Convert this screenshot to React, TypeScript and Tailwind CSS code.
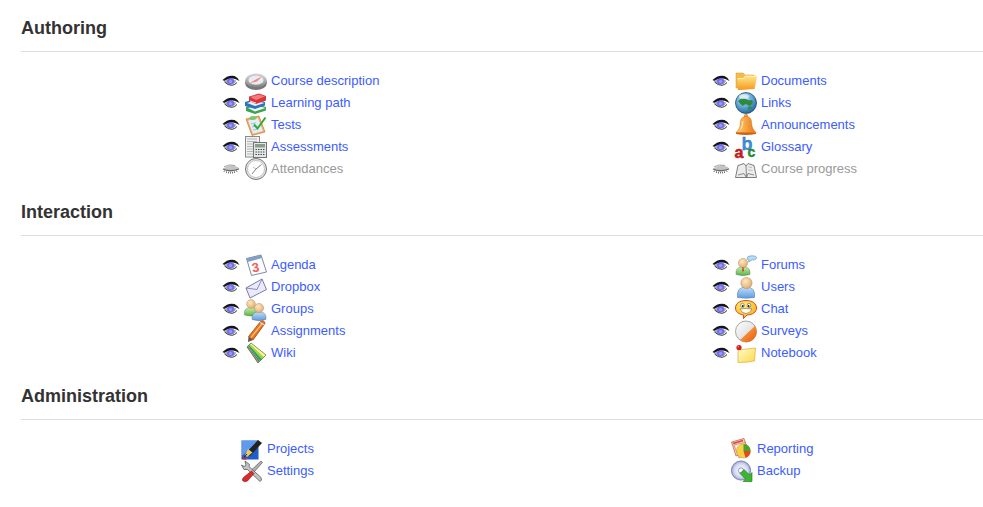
import type { ReactNode } from "react";

const Svg = ({ children }: { children: ReactNode }) => (
  <svg viewBox="0 0 22 22" className="h-[22px] w-[22px] shrink-0 overflow-visible">
    {children}
  </svg>
);

const Defs = () => (
  <svg className="absolute h-0 w-0">
    <defs>
      <linearGradient id="metal" x1="0" y1="0" x2="0" y2="1">
        <stop offset="0" stopColor="#e4e4e4" />
        <stop offset="1" stopColor="#7c7c7c" />
      </linearGradient>
      <linearGradient id="folder" x1="0" y1="0" x2="0" y2="1">
        <stop offset="0" stopColor="#ffe88c" />
        <stop offset="1" stopColor="#f8981c" />
      </linearGradient>
      <linearGradient id="bell" x1="0" y1="0" x2="1" y2="0">
        <stop offset="0" stopColor="#ffd27a" />
        <stop offset="1" stopColor="#ee7410" />
      </linearGradient>
      <radialGradient id="globe" cx="0.4" cy="0.3" r="0.8">
        <stop offset="0" stopColor="#cfeaf8" />
        <stop offset="0.6" stopColor="#4c97c8" />
        <stop offset="1" stopColor="#1a5587" />
      </radialGradient>
      <radialGradient id="skin" cx="0.4" cy="0.35" r="0.7">
        <stop offset="0" stopColor="#fde8c4" />
        <stop offset="1" stopColor="#e0ab6c" />
      </radialGradient>
      <linearGradient id="blueBody" x1="0" y1="0" x2="0" y2="1">
        <stop offset="0" stopColor="#c4def9" />
        <stop offset="1" stopColor="#5d9ce2" />
      </linearGradient>
      <linearGradient id="greenBody" x1="0" y1="0" x2="0" y2="1">
        <stop offset="0" stopColor="#c9eeac" />
        <stop offset="1" stopColor="#5ab545" />
      </linearGradient>
      <radialGradient id="smile" cx="0.4" cy="0.3" r="0.8">
        <stop offset="0" stopColor="#fff27a" />
        <stop offset="1" stopColor="#f5a70c" />
      </radialGradient>
      <linearGradient id="orangePie" x1="0" y1="0" x2="1" y2="1">
        <stop offset="0" stopColor="#ffb05a" />
        <stop offset="1" stopColor="#e85a08" />
      </linearGradient>
      <linearGradient id="sticky" x1="0" y1="0" x2="1" y2="1">
        <stop offset="0" stopColor="#fffcc8" />
        <stop offset="1" stopColor="#fbd84f" />
      </linearGradient>
      <linearGradient id="whitePie" x1="0" y1="0" x2="1" y2="1">
        <stop offset="0" stopColor="#ffffff" />
        <stop offset="1" stopColor="#cfcfcf" />
      </linearGradient>
      <radialGradient id="disc" cx="0.5" cy="0.5" r="0.5">
        <stop offset="0" stopColor="#ffffff" />
        <stop offset="0.7" stopColor="#d3d9f2" />
        <stop offset="1" stopColor="#98a1d0" />
      </radialGradient>
    </defs>
  </svg>
);

const Eye = ({ off }: { off?: boolean }) =>
  off ? (
    <svg viewBox="0 0 18 12" className="h-3 w-[18px] shrink-0">
      <path d="M1 6Q5 2 11 2.5Q15 3 17.5 5.5Q14 8.5 8 8.5Q3.5 8.5 1 6Z" fill="#c4c4c4" />
      <path d="M2 3.8Q7 .8 13 2.5" fill="none" stroke="#8d8d8d" strokeWidth="0.8" />
      <path d="M1 6Q8 9.5 17 6" fill="none" stroke="#6c6c6c" strokeWidth="1.3" />
      <path d="M2.5 7.5L2 9M4.5 8.3V10M6.5 8.8V10.5M8.5 9V10.5M10.5 8.8V10.5M12.5 8.3V10M14.5 7.5L15 9" stroke="#777" strokeWidth="1" />
    </svg>
  ) : (
    <svg viewBox="0 0 18 12" className="h-3 w-[18px] shrink-0">
      <path d="M0.5 5Q6 -0.5 12.5 1Q16 2.5 17.5 6L14.5 4.5Q9 2 2.5 6Z" fill="#151515" />
      <path d="M2 6Q7 2.5 14 5.5Q14 9 9 9.5Q4.5 9.5 2 6Z" fill="#a9a9b4" />
      <ellipse cx="8.6" cy="6.2" rx="3.5" ry="3" fill="#6f6df2" />
      <ellipse cx="8.6" cy="6.6" rx="1.7" ry="1.5" fill="#9b9aff" />
      <path d="M2.5 7Q6 10.5 10 10.3Q13 10 15 7.5" fill="none" stroke="#3a3a3a" strokeWidth="1" />
    </svg>
  );

const Compass = () => (
  <Svg>
    <ellipse cx="11" cy="12.8" rx="11" ry="7.2" fill="#777" />
    <ellipse cx="11" cy="10.5" rx="10.8" ry="7.2" fill="url(#metal)" />
    <ellipse cx="11" cy="10" rx="8" ry="5" fill="#e8ecf2" stroke="#999" strokeWidth="0.5" />
    <path d="M5 13L17 6.5L10 11Z" fill="#e8483c" />
    <path d="M5 13L17 6.5L12 11.5Z" fill="#f28a80" />
  </Svg>
);

const Books = () => (
  <Svg>
    <path d="M1 15L11 12L21 15V18.5L10 22L1 19Z" fill="#3aa450" />
    <path d="M3 16L11 13.5L20.5 16L10 19.5Z" fill="#f0f7ee" />
    <path d="M0 10L10 7L20 10V13.5L10 17L0 14Z" fill="#2a72c4" />
    <path d="M2 11L10 8.5L19.5 11L10 14Z" fill="#eaf1fa" />
    <path d="M4 4.5L14 1.5L21 4V8.5L11 12L4 9Z" fill="#d9343a" />
    <path d="M5 5L14 2.5L20 4.5L11 8Z" fill="#f27a80" />
    <path d="M5 9L11 11" stroke="#fff" strokeWidth="0.8" />
  </Svg>
);

const Tests = () => (
  <Svg>
    <path d="M1 5L14 2L20 18L7 21.5Z" fill="#f5ab62" stroke="#cc7a32" strokeWidth="0.7" />
    <path d="M3 6.5L13 4L18 17L8 19.8Z" fill="#e0eef9" />
    <path d="M6 10L11 8.8M7 13L12 11.8M8 16L13 14.8" stroke="#93b3cf" strokeWidth="0.8" />
    <ellipse cx="8" cy="4" rx="3.5" ry="2" fill="#7cc86c" />
    <path d="M9 10.5L12.5 14.5L20.5 3.5" fill="none" stroke="#2dab34" strokeWidth="2" />
  </Svg>
);

const Assessments = () => (
  <Svg>
    <rect x="0.5" y="0.5" width="14" height="20.5" fill="#f1f1f1" stroke="#8b8b8b" />
    <path d="M2 3H12M2 5.5H12M2 8H8M2 10.5H8M2 13H8M2 15.5H8M2 18H8" stroke="#a5a5a5" strokeWidth="0.8" />
    <rect x="8.5" y="6.5" width="13" height="15" fill="#e3e6e6" stroke="#6f7676" />
    <rect x="10" y="8" width="10" height="3.5" fill="#8c9b8b" />
    <path d="M10.5 13.5H19.5M10.5 16H19.5M10.5 18.5H19.5" stroke="#444" strokeWidth="1.1" strokeDasharray="1.4 1.1" />
  </Svg>
);

const Clock = () => (
  <Svg>
    <circle cx="11" cy="11" r="10.5" fill="#e6e6e6" stroke="#777" strokeWidth="1" />
    <circle cx="11" cy="11" r="8.5" fill="#fff" stroke="#b5b5b5" strokeWidth="0.8" />
    <path d="M11 11L16.5 6.5M11 11L7 16" stroke="#808080" strokeWidth="1" />
    <path d="M11 11L8 9" stroke="#aaa" strokeWidth="0.8" />
  </Svg>
);

const Folder = () => (
  <Svg>
    <path d="M1 3H8L10 5H19V9H3V18H1Z" fill="#f4bb4c" stroke="#d9952a" strokeWidth="0.5" />
    <path d="M3 20L2 8H8L10 5.5H21L22 7L19.5 19L5 20Z" fill="url(#folder)" />
    <path d="M3 8.5H8.5L10.5 6.5H21" fill="none" stroke="#fff4bd" strokeWidth="0.8" />
  </Svg>
);

const Globe = () => (
  <Svg>
    <circle cx="11" cy="11" r="10.5" fill="url(#globe)" stroke="#1c4a70" strokeWidth="0.8" />
    <path d="M3 9Q7 5 11 7Q13 9 17 8Q19 11 16 13Q14 15 13 13Q10 11 8 14Q5 12 3 9Z" fill="#2f8a3f" />
    <path d="M13 15Q16 14 17 15Q15 18 13 18Z" fill="#2f8a3f" />
    <ellipse cx="9" cy="4.5" rx="5" ry="2.3" fill="#e9f6fc" opacity="0.7" />
  </Svg>
);

const Bell = () => (
  <Svg>
    <circle cx="11" cy="2" r="1.7" fill="#f4a23c" stroke="#c8690d" strokeWidth="0.5" />
    <path d="M11 2.5C6.5 2.5 5.5 5.5 5.3 10C5.1 14 3.5 16 1 18.5H21C18.5 16 16.9 14 16.7 10C16.5 5.5 15.5 2.5 11 2.5Z" fill="url(#bell)" stroke="#c8690d" strokeWidth="0.5" />
    <path d="M1 18.5H21V20Q11 22 1 20Z" fill="#d5600a" />
    <path d="M8 7Q7.5 12 6 15" stroke="#ffeebf" strokeWidth="1" fill="none" />
  </Svg>
);

const Glossary = () => (
  <Svg>
    <text x="6.5" y="13.5" fontFamily="Liberation Sans, sans-serif" fontWeight="700" fontSize="18" fill="#3b8fe0" stroke="#2b6fb8" strokeWidth="0.3">b</text>
    <text x="12.5" y="20.5" fontFamily="Liberation Sans, sans-serif" fontWeight="700" fontSize="14" fill="#1f9c3a" stroke="#0e6e24" strokeWidth="0.4">c</text>
    <text x="-0.5" y="22" fontFamily="Liberation Sans, sans-serif" fontWeight="700" fontSize="16" fill="#d9191f" stroke="#a80f14" strokeWidth="0.5">a</text>
  </Svg>
);

const OpenBook = () => (
  <Svg>
    <path d="M0.5 19.5L3 7.5L9 5.5L11 8L13 5.5L19 7.5L21.5 19.5H0.5Z" fill="#ececec" stroke="#6f6f6f" strokeWidth="0.9" />
    <path d="M11 8L11.5 19.5M3 17L9 15.5L11.5 19.5L13 15.5L19 17" fill="none" stroke="#6f6f6f" strokeWidth="0.8" />
    <path d="M13.5 9L17 9.5M13 12L17.5 12.5" stroke="#b0b0b0" strokeWidth="0.8" fill="none" />
  </Svg>
);

const Agenda = () => (
  <Svg>
    <path d="M1.5 4.5L16 1L21.5 18L6.5 21.5Z" fill="#fcfcfc" stroke="#6e7f96" strokeWidth="0.9" />
    <path d="M1.5 4.5L16 1L17 4L2.5 8Z" fill="#7f9fc6" />
    <text x="7" y="18" fontFamily="Liberation Sans, sans-serif" fontWeight="700" fontSize="13" fill="#f06060" transform="rotate(-10 10 14)">3</text>
  </Svg>
);

const Envelope = () => (
  <Svg>
    <path d="M1 12L17 3L21.5 13.5L5 22Z" fill="#ebe9fc" stroke="#5e5c94" strokeWidth="0.8" />
    <path d="M1 12L12 13.5L17 3" fill="none" stroke="#7775aa" strokeWidth="0.8" />
  </Svg>
);

const Person = ({ cx, cy, body, s = 1 }: { cx: number; cy: number; body: string; s?: number }) => (
  <g transform={`translate(${cx} ${cy}) scale(${s})`}>
    <path d="M-6.5 11.5C-7.5 6 -4 4 0 4C4 4 7.5 6 6.5 11.5Q0 13.5 -6.5 11.5Z" fill={body} stroke="#3f6f50" strokeWidth="0.4" />
    <circle cx="0" cy="0.5" r="4.4" fill="url(#skin)" stroke="#b4834d" strokeWidth="0.4" />
  </g>
);

const Groups = () => (
  <Svg>
    <Person cx={6} cy={5.5} body="url(#greenBody)" />
    <Person cx={14} cy={9.5} body="url(#blueBody)" s={1.05} />
  </Svg>
);

const Pencil = () => (
  <Svg>
    <path d="M3.5 16.5L15.5 1.5Q19.5 -0.5 20 3.5L8 20Z" fill="#f0731c" stroke="#8f3d0c" strokeWidth="0.7" />
    <path d="M6 17.5L17.5 3" stroke="#ffc98c" strokeWidth="1.2" />
    <path d="M3.5 16.5L3 22L8 20Z" fill="#6b5544" />
    <path d="M15 2.5L19.5 5" stroke="#dcdcdc" strokeWidth="1.4" />
  </Svg>
);

const Wiki = () => (
  <Svg>
    <path d="M6 1L21 13L19 15L5 2Z" fill="#fff2a0" />
    <path d="M5 2L19 15L17 17L4 3Z" fill="#a6d63f" />
    <path d="M4 3L17 17L15 19L3 4Z" fill="#35a53c" />
    <path d="M3 4L15 19L13.8 20L2.5 4.5Z" fill="#2f80d0" />
    <path d="M2.5 4.5L13.8 20L13 21L2 5Z" fill="#e8601c" />
    <path d="M6 1L21 13L13 21L2 5Z" fill="none" stroke="#44701a" strokeWidth="0.7" />
  </Svg>
);

const Forums = () => (
  <Svg>
    <Person cx={8} cy={8.5} body="url(#greenBody)" s={1.05} />
    <path d="M12 4.5Q12 2 16 1.8Q21.5 1.5 21.5 3.8Q21.5 6 17 6L13.5 8L14 5.8Q12 5.8 12 4.5Z" fill="#b3dbf5" stroke="#5c93bf" strokeWidth="0.6" />
    <path d="M7.5 13L8.5 13L9 16.5L8 18L7 16.5Z" fill="#d44b30" />
  </Svg>
);

const Users = () => (
  <Svg>
    <path d="M2.5 21.5Q1 11 11 11Q21 11 19.5 21.5Q11 23 2.5 21.5Z" fill="url(#blueBody)" stroke="#4578ae" strokeWidth="0.5" />
    <circle cx="11.5" cy="7" r="5.6" fill="url(#skin)" stroke="#b4834d" strokeWidth="0.5" />
  </Svg>
);

const Chat = () => (
  <Svg>
    <path d="M11 2.5C17.5 2.5 21.5 5.5 21.5 10C21.5 14 17.5 17 12 17L8.5 20.5L8.5 17C3.5 16 0.5 14 0.5 10C0.5 5.5 4.5 2.5 11 2.5Z" fill="url(#smile)" stroke="#dd4a1c" strokeWidth="1" />
    <ellipse cx="7.5" cy="7.5" rx="1.8" ry="2.2" fill="#fff" stroke="#444" strokeWidth="0.5" />
    <ellipse cx="14" cy="7.5" rx="1.8" ry="2.2" fill="#fff" stroke="#444" strokeWidth="0.5" />
    <circle cx="7.8" cy="8" r="0.9" fill="#111" />
    <circle cx="13.7" cy="8" r="0.9" fill="#111" />
    <path d="M5 11Q11 10 17 11Q15 15.5 11 15.5Q7 15.5 5 11Z" fill="#fff" stroke="#7a3b0c" strokeWidth="0.5" />
  </Svg>
);

const Survey = () => (
  <Svg>
    <circle cx="11" cy="11.5" r="10.5" fill="url(#whitePie)" stroke="#8f8f8f" strokeWidth="0.8" />
    <path d="M20 6A10.4 10.4 0 0 1 5 20Z" fill="url(#orangePie)" />
  </Svg>
);

const Note = () => (
  <Svg>
    <path d="M3 8L20.5 6L19.5 19Q12 20.5 3 20.5Z" fill="url(#sticky)" stroke="#e0ab36" strokeWidth="0.7" />
    <circle cx="4" cy="5.5" r="2.6" fill="#d71c1c" />
    <circle cx="3.3" cy="4.8" r="0.7" fill="#ff9a9a" />
  </Svg>
);

const Projects = () => (
  <Svg>
    <rect x="0.5" y="2.5" width="17" height="19" fill="#1f5ec8" />
    <path d="M1 3H17L1 18Z" fill="#5f9af0" />
    <path d="M5 15L17 2L21 5L9 18Z" fill="#222" />
    <path d="M4 17L7 11L11.5 14.5L6 19Z" fill="#edc95e" />
    <path d="M1.5 21L6 16" stroke="#222" strokeWidth="1" />
    <path d="M1 17Q4 19 2 21Q5 22 7 20" fill="none" stroke="#e03030" strokeWidth="0.9" />
  </Svg>
);

const Settings = () => (
  <Svg>
    <path d="M4 1L8.5 4.5L8 6.5L20 17.5Q21.5 20.5 19 21.5L6.5 9.5L3 9.5L0.5 5L3 6.5L5 5.5Z" fill="#c4c4c4" stroke="#484848" strokeWidth="0.7" />
    <path d="M20 1L21.5 2.5L13.5 11.5L11 9.5Z" fill="#b0b0b0" stroke="#484848" strokeWidth="0.6" />
    <path d="M10.5 11L13 13.5L6.5 21Q3 22.5 1.5 20.5Q1 18.5 3 17Z" fill="#dc2a2e" stroke="#7c1313" strokeWidth="0.6" />
  </Svg>
);

const Reporting = () => (
  <Svg>
    <path d="M0.5 4L13 0.5L17 12L5 18Z" fill="#f6d0c2" stroke="#c2503a" strokeWidth="0.7" />
    <path d="M2 5.5L12 2.5" stroke="#d64b30" strokeWidth="1.6" />
    <path d="M3 7L14 4.5L18 17L8 20Z" fill="#fbe9dd" stroke="#c2503a" strokeWidth="0.5" />
    <circle cx="12.5" cy="13" r="7" fill="#f8cf45" stroke="#c09018" strokeWidth="0.4" />
    <path d="M12.5 13V6A7 7 0 0 1 19.5 13Z" fill="#47a62f" />
    <path d="M12.5 13H19.5A7 7 0 0 1 14.5 19.7Z" fill="#e04a22" />
  </Svg>
);

const Backup = () => (
  <Svg>
    <circle cx="10" cy="10.5" r="9.6" fill="url(#disc)" stroke="#5d67a8" strokeWidth="0.7" />
    <circle cx="10" cy="10.5" r="2.6" fill="#fff" stroke="#6b74ad" strokeWidth="0.7" />
    <path d="M13 9.5L18.5 15L21 12.5V21.5H12L14.5 19L9 13.5Z" fill="#3cb531" stroke="#1c7519" strokeWidth="0.6" />
  </Svg>
);

type Tool = { name: string; icon: ReactNode; off?: boolean };

const sections: { title: string; rows: [Tool, Tool][]; admin?: boolean }[] = [
  {
    title: "Authoring",
    rows: [
      [{ name: "Course description", icon: <Compass /> }, { name: "Documents", icon: <Folder /> }],
      [{ name: "Learning path", icon: <Books /> }, { name: "Links", icon: <Globe /> }],
      [{ name: "Tests", icon: <Tests /> }, { name: "Announcements", icon: <Bell /> }],
      [{ name: "Assessments", icon: <Assessments /> }, { name: "Glossary", icon: <Glossary /> }],
      [{ name: "Attendances", icon: <Clock />, off: true }, { name: "Course progress", icon: <OpenBook />, off: true }],
    ],
  },
  {
    title: "Interaction",
    rows: [
      [{ name: "Agenda", icon: <Agenda /> }, { name: "Forums", icon: <Forums /> }],
      [{ name: "Dropbox", icon: <Envelope /> }, { name: "Users", icon: <Users /> }],
      [{ name: "Groups", icon: <Groups /> }, { name: "Chat", icon: <Chat /> }],
      [{ name: "Assignments", icon: <Pencil /> }, { name: "Surveys", icon: <Survey /> }],
      [{ name: "Wiki", icon: <Wiki /> }, { name: "Notebook", icon: <Note /> }],
    ],
  },
  {
    title: "Administration",
    admin: true,
    rows: [
      [{ name: "Projects", icon: <Projects /> }, { name: "Reporting", icon: <Reporting /> }],
      [{ name: "Settings", icon: <Settings /> }, { name: "Backup", icon: <Backup /> }],
    ],
  },
];

const Row = ({ tool, admin }: { tool: Tool; admin?: boolean }) => (
  <div className={`flex h-[22px] items-center ${admin ? "pl-[220px]" : "pl-[201px]"}`}>
    {!admin && (
      <span className="mr-[5px] flex">
        <Eye off={tool.off} />
      </span>
    )}
    {tool.icon}
    <a className={`ml-1 text-[13px] leading-[22px] ${tool.off ? "text-[#999]" : "text-[#3c5cff]"}`}>{tool.name}</a>
  </div>
);

export default function App() {
  return (
    <div className="relative min-h-[507px] bg-white pl-[21px] pt-[18px] font-['Liberation_Sans',sans-serif]">
      <Defs />
      {sections.map((s) => (
        <section key={s.title} className="mb-[22px]">
          <h2 className="border-b border-[#ddd] pb-[13px] text-[18px] font-bold leading-5 text-[#333]">{s.title}</h2>
          <div className="mt-[18px] grid grid-cols-[490px_1fr]">
            {s.rows.flatMap((r) => [
              <Row key={r[0].name} tool={r[0]} admin={s.admin} />,
              <Row key={r[1].name} tool={r[1]} admin={s.admin} />,
            ])}
          </div>
        </section>
      ))}
    </div>
  );
}
